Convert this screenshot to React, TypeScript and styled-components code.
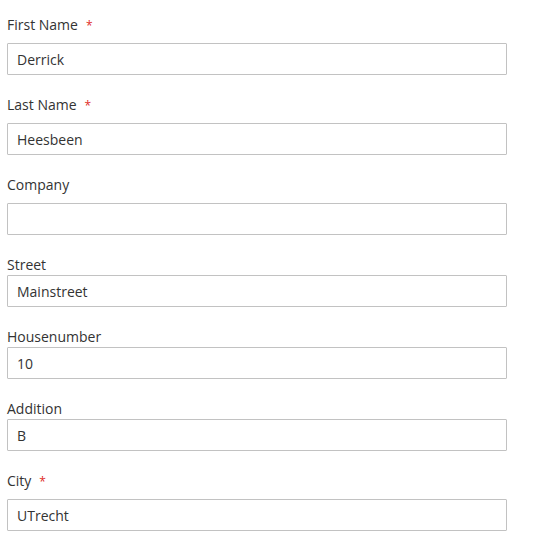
import React from "react";
import styled, { createGlobalStyle } from "styled-components";

const GlobalStyle = createGlobalStyle`
  html, body {
    margin: 0;
    padding: 0;
    background: #fff;
  }
  body {
    font-family: "Open Sans", "Liberation Sans", sans-serif;
    color: #333;
  }
`;

const Form = styled.form`
  display: flex;
  flex-direction: column;
  gap: 20px;
  width: 500px;
  padding: 15px 0 0 7px;
`;

const Field = styled.div`
  display: flex;
  flex-direction: column;
`;

const Label = styled.label<{ spaced: boolean }>`
  display: block;
  height: 20px;
  font-size: 14px;
  line-height: 20px;
  color: #333;
  margin-bottom: ${(props) => (props.spaced ? "8px" : "0")};
`;

const Star = styled.span`
  color: #e02b27;
  font-size: 12px;
  line-height: 1;
  margin-left: 8px;
`;

const Input = styled.input`
  box-sizing: border-box;
  width: 100%;
  height: 32px;
  margin: 0;
  padding: 0 9px;
  border: 1px solid #c2c2c2;
  border-radius: 1px;
  background: #fff;
  font-family: "Open Sans", "Liberation Sans", sans-serif;
  font-size: 14px;
  color: #333;
  outline: none;
`;

interface FieldDef {
  label: string;
  value: string;
  required?: boolean;
  spaced: boolean;
}

const fields: FieldDef[] = [
  { label: "First Name", value: "Derrick", required: true, spaced: true },
  { label: "Last Name", value: "Heesbeen", required: true, spaced: true },
  { label: "Company", value: "", spaced: true },
  { label: "Street", value: "Mainstreet", spaced: false },
  { label: "Housenumber", value: "10", spaced: false },
  { label: "Addition", value: "B", spaced: false },
  { label: "City", value: "UTrecht", required: true, spaced: true },
];

const App: React.FC = () => (
  <>
    <GlobalStyle />
    <Form onSubmit={(e) => e.preventDefault()}>
      {fields.map((f) => (
        <Field key={f.label}>
          <Label spaced={f.spaced}>
            {f.label}
            {f.required && <Star>*</Star>}
          </Label>
          <Input type="text" defaultValue={f.value} />
        </Field>
      ))}
    </Form>
  </>
);

export default App;
